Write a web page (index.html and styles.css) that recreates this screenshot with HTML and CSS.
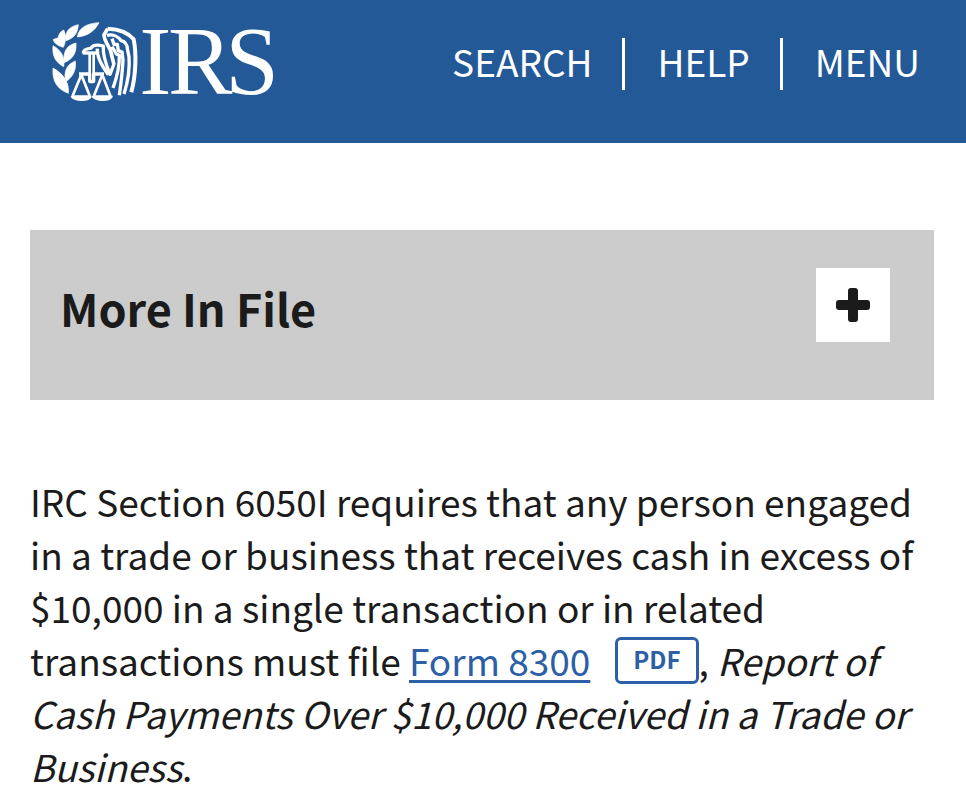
FILE: index.html
```html
<!DOCTYPE html>
<html lang="en">
<head>
  <meta charset="UTF-8">
  <meta name="viewport" content="width=device-width, initial-scale=1.0">
  <title>Form 8300 | Internal Revenue Service</title>
  <link rel="stylesheet" href="styles.css">
</head>
<body>

<header class="header">
  <a class="logo" href="#" aria-label="IRS home">
    <svg viewBox="36 36 690 240" width="230" height="80" aria-hidden="true">
      <!-- olive branch -->
      <g fill="#fff" stroke="#fff" stroke-width="2" stroke-linejoin="round">
        <path d="M112 81 C116 52 142 40 177 38 C165 62 144 78 112 81Z"/>
        <path d="M115 44 C86 50 74 66 78 92 C106 83 113 66 115 44Z"/>
        <path d="M71 60 C62 64 56 72 54 84 L40 88 C40 98 54 108 70 112 C79 92 79 76 71 60Z"/>
        <path d="M108 99 C80 106 69 124 72 158 C100 147 110 128 108 99Z"/>
        <path d="M39 107 C36 138 46 156 71 170 C76 142 64 121 39 107Z"/>
        <path d="M106 153 C81 163 70 182 77 216 C100 199 109 180 106 153Z"/>
        <path d="M39 174 C36 212 50 237 85 250 C89 220 71 191 39 174Z"/>
      </g>
      <!-- eagle -->
      <g fill="none" stroke="#fff" stroke-width="10" stroke-linejoin="round">
        <path d="M130 130 C130 120 138 116 152 115 C158 105 172 103 190 108 C188 132 198 164 210 193 L222 162"/>
        <path d="M128 129 H168"/>
        <path d="M172 116 C170 140 184 166 205 194"/>
        <path d="M203 56 L192 75 C193 92 203 103 211 120 L222 164" stroke-width="11"/>
        <path d="M203 56 C233 57 263 66 281 88 C289 126 289 190 274 247" stroke-width="12"/>
        <path d="M201 76 C219 72 235 80 243 92 C258 94 262 106 263 121 L267 140 C270 178 266 208 252 252"/>
        <path d="M216 86 L222 103 L232 103 L235 122 L246 126 L249 150 C247 190 243 220 238 256"/>
        <path d="M216 110 L229 132 L238 136 C239 172 230 204 219 234"/>
      </g>
      <!-- scales -->
      <g fill="none" stroke="#fff" stroke-width="8" stroke-linejoin="round">
        <path d="M149 130 V198 M161 130 V198 M149 216 H161"/>
        <path d="M117 192 H149 V214 H161 V192 H192" stroke-width="10"/>
        <path d="M124 194 L98 257 M124 194 L149 257 M187 194 L162 257 M187 194 L211 257"/>
        <path fill="#fff" d="M96 260 H151 C143 272 107 272 96 260Z M160 260 H214 C206 272 170 272 160 260Z"/>
      </g>
      <text class="logo-text" x="298 384 556" y="252">IRS</text>
    </svg>
  </a>
  <nav class="nav">
    <a href="#">SEARCH</a>
    <a href="#">HELP</a>
    <a href="#">MENU</a>
  </nav>
</header>

<main class="content">
  <section class="more-in">
    <h2>More In File</h2>
    <button type="button" class="toggle" aria-label="Expand">
      <svg viewBox="0 0 34 34" width="34" height="34" aria-hidden="true">
        <path fill="#1b1b1b" d="M15 0h4a3 3 0 0 1 3 3v9h9a3 3 0 0 1 3 3v4a3 3 0 0 1-3 3h-9v9a3 3 0 0 1-3 3h-4a3 3 0 0 1-3-3v-9H3a3 3 0 0 1-3-3v-4a3 3 0 0 1 3-3h9V3a3 3 0 0 1 3-3z"/>
      </svg>
    </button>
  </section>

  <p>IRC Section 6050I requires that any person engaged in a trade or business that receives cash in excess of $10,000 in a single transaction or in related transactions must file <a href="#">Form 8300</a><span class="pdf">PDF</span>, <em>Report of Cash Payments Over $10,000 Received in a Trade or Business</em>.</p>
</main>

</body>
</html>
```

FILE: styles.css
```css
* {
  box-sizing: border-box;
}
body {
  margin: 0;
  background-color: #fff;
  color: #1b1b1b;
  font-family: "Noto Sans CJK SC", "Open Sans", sans-serif;
  font-size: 37px;
  line-height: 53px;
}
.header {
  display: flex;
  justify-content: space-between;
  align-items: flex-start;
  padding: 22px 16px 41px 52px;
  background-color: #245998;
}
.logo svg {
  display: block;
}
.logo-text {
  fill: #fff;
  font-family: "Liberation Serif", serif;
  font-size: 290px;
}
.nav {
  display: flex;
  padding-top: 16px;
}
.nav a {
  padding: 0 30px 6px 32px;
  color: #fff;
  line-height: 46px;
  text-decoration: none;
}
.nav a + a {
  border-left: 3px solid #fff;
}
.content {
  padding: 87px 32px 0 30px;
}
.more-in {
  display: flex;
  justify-content: space-between;
  align-items: flex-start;
  padding: 38px 44px 58px 30px;
  background-color: #ccc;
}
.more-in h2 {
  margin: 13px 0 0;
  font-size: 45px;
  font-weight: 700;
}
.toggle {
  display: flex;
  align-items: center;
  justify-content: center;
  width: 74px;
  height: 74px;
  padding: 0;
  border: none;
  background-color: #fff;
  cursor: pointer;
}
p {
  margin: 75px 0 0;
}
p a {
  color: #2c5fa5;
  text-decoration-thickness: 3px;
  text-underline-offset: 4px;
}
.pdf {
  display: inline-block;
  margin-left: 25px;
  padding: 0 15px 4px;
  border: 3px solid #2c5fa5;
  border-radius: 6px;
  color: #2c5fa5;
  font-size: 24px;
  font-weight: 700;
  line-height: 37px;
  vertical-align: 7px;
}
```
